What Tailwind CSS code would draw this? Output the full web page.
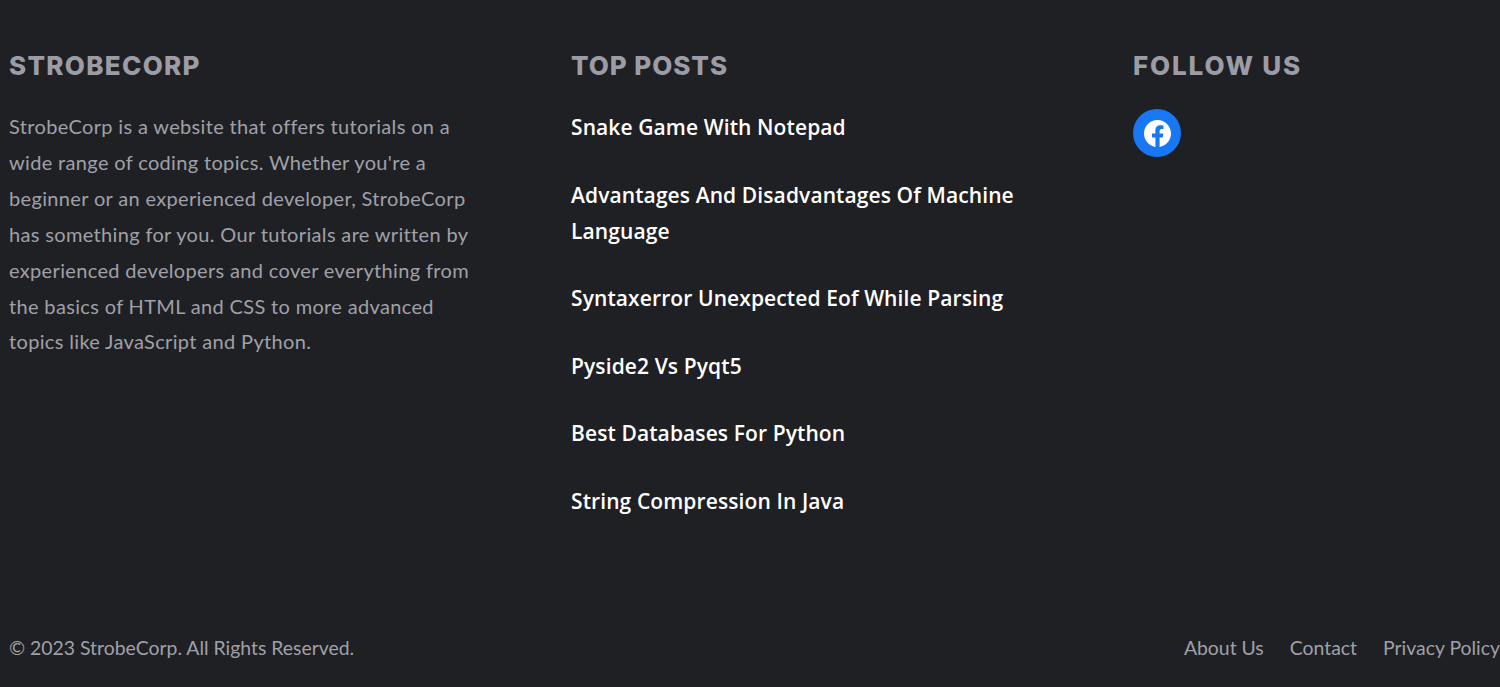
<!DOCTYPE html>
<html lang="en">
<head>
    <meta charset="UTF-8">
    <meta name="viewport" content="width=device-width, initial-scale=1.0">
    <title>StrobeCorp Footer</title>
    <script src="https://cdn.jsdelivr.net/npm/@tailwindcss/browser@4"></script>
</head>
<body class="bg-[#1f2024] h-[687px] overflow-hidden font-['Lato',sans-serif] text-[20px] text-[#a0a0a8]">

    <footer class="flex flex-col h-[687px] pl-[9px]">
        <div class="grid grid-cols-[562px_562px_1fr] pt-[48px] h-[630px]">

            <!-- About -->
            <section class="w-[470px]">
                <h2 class="font-['Inter',sans-serif] font-extrabold text-[26px] tracking-[1.3px] leading-[36px] text-[#9c9ca6] mb-[25px]">STROBECORP</h2>
                <p class="leading-[35.9px] tracking-[0.34px]">StrobeCorp is a website that offers tutorials on a wide range of coding topics. Whether you're a beginner or an experienced developer, StrobeCorp has something for you. Our tutorials are written by experienced developers and cover everything from the basics of HTML and CSS to more advanced topics like JavaScript and Python.</p>
            </section>

            <!-- Top posts -->
            <section class="w-[470px]">
                <h2 class="font-['Inter',sans-serif] font-extrabold text-[26px] tracking-[0.95px] leading-[36px] text-[#9c9ca6] mb-[25px]">TOP POSTS</h2>
                <ul class="flex flex-col gap-[31.5px] font-['Open_Sans',sans-serif] font-semibold text-[21px] tracking-[0.1px] text-white leading-[36px]">
                    <li>Snake Game With Notepad</li>
                    <li>Advantages And Disadvantages Of Machine Language</li>
                    <li>Syntaxerror Unexpected Eof While Parsing</li>
                    <li>Pyside2 Vs Pyqt5</li>
                    <li>Best Databases For Python</li>
                    <li>String Compression In Java</li>
                </ul>
            </section>

            <!-- Social -->
            <section>
                <h2 class="font-['Inter',sans-serif] font-extrabold text-[26px] tracking-[1.85px] leading-[36px] text-[#9c9ca6] mb-[25px]">FOLLOW US</h2>
                <a href="#" class="flex items-center justify-center w-12 h-12 rounded-full bg-[#1877f2]">
                    <svg viewBox="0 0 24 24" class="w-[27px] h-[27px]" fill="#fff"><path d="M24 12.07C24 5.4 18.63 0 12 0S0 5.4 0 12.07c0 6.03 4.39 11.02 10.13 11.93v-8.44H7.08v-3.49h3.05V9.41c0-3.02 1.79-4.69 4.53-4.69 1.31 0 2.69.24 2.69.24v2.97h-1.51c-1.49 0-1.96.93-1.96 1.89v2.25h3.33l-.53 3.49h-2.8V24C19.61 23.09 24 18.1 24 12.07z"/></svg>
                </a>
            </section>
        </div>

        <div class="flex justify-between items-center leading-[36px] text-[19.4px]">
            <p>© 2023 StrobeCorp. All Rights Reserved.</p>
            <nav class="flex gap-[26px]">
                <a href="#">About Us</a>
                <a href="#">Contact</a>
                <a href="#">Privacy Policy</a>
            </nav>
        </div>
    </footer>

</body>
</html>
